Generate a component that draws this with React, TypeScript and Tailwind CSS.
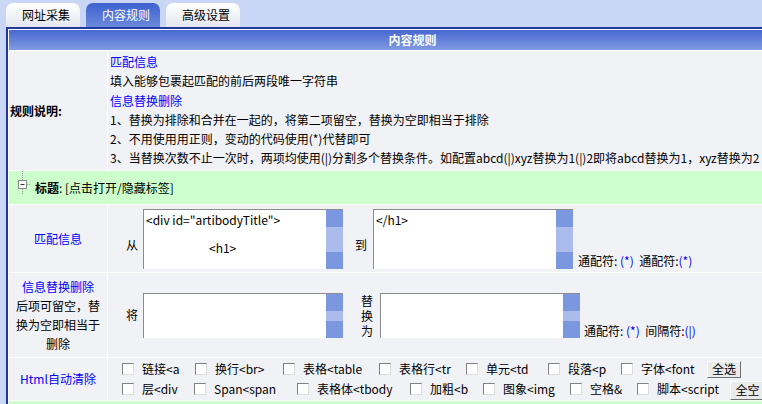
import React from "react";

const tabs = [
  { name: "网址采集", active: false },
  { name: "内容规则", active: true },
  { name: "高级设置", active: false },
];

const tagsTop = [
  { label: "链接<a", w: "w-[73px]" },
  { label: "换行<br>", w: "w-[88px]" },
  { label: "表格<table", w: "w-[96px]" },
  { label: "表格行<tr", w: "w-[87px]" },
  { label: "单元<td", w: "w-[82px]" },
  { label: "段落<p", w: "w-[73px]" },
  { label: "字体<font", w: "w-[86px]" },
];

const tagsBottom = [
  { label: "层<div", w: "w-[72px]" },
  { label: "Span<span", w: "w-[103px]" },
  { label: "表格体<tbody", w: "w-[113px]" },
  { label: "加粗<b", w: "w-[73px]" },
  { label: "图象<img", w: "w-[87px]" },
  { label: "空格&", w: "w-[67px]" },
  { label: "脚本<script", w: "w-[93px]" },
];

const Scrollbar: React.FC = () => (
  <div className="flex w-[17px] shrink-0 flex-col">
    <div className="h-[17px] bg-[#7b97df]" />
    <div className="flex-1 bg-[#aabbec]" />
    <div className="h-[17px] bg-[#7b97df]" />
  </div>
);

const FakeArea: React.FC<{ className: string; children?: React.ReactNode }> = ({ className, children }) => (
  <div className={`flex shrink-0 border-t border-l border-[#8c8c8c] bg-white ${className}`}>
    <div className="flex-1 overflow-hidden whitespace-pre pl-[2px] pt-[3px] leading-[14px]">{children}</div>
    <Scrollbar />
  </div>
);

const CheckItem: React.FC<{ label: string; w: string }> = ({ label, w }) => (
  <div className={`flex shrink-0 items-center ${w}`}>
    <span className="h-[12px] w-[12px] shrink-0 border border-t-[#808080] border-l-[#808080] border-r-[#dcdcdc] border-b-[#dcdcdc] bg-white" />
    <span className="ml-[8px] whitespace-nowrap">{label}</span>
  </div>
);

const Wild: React.FC<{ children: React.ReactNode }> = ({ children }) => (
  <span className="text-[#0000ff]">{children}</span>
);

export default function App() {
  return (
    <div className="h-[404px] w-[762px] overflow-hidden bg-[#c9d6f5] font-['Noto_Sans_CJK_SC',sans-serif] text-[12px] text-black">
      {/* tab strip */}
      <div className="flex h-[27px] items-end gap-[6px] pl-[6px]">
        {tabs.map((tab) => (
          <div
            key={tab.name}
            className={
              tab.active
                ? "flex h-[24px] w-[74px] items-center rounded-t-[7px] bg-linear-to-b from-[#3f61cf] to-[#6a89dc] pl-[16px] text-white"
                : "flex h-[24px] w-[74px] items-center rounded-t-[7px] bg-linear-to-b from-white to-[#e3e7ef] pl-[16px]"
            }
          >
            {tab.name}
          </div>
        ))}
      </div>

      {/* panel */}
      <div className="ml-[6px] w-[810px] border-t-2 border-l-2 border-[#21399a] bg-white pt-px pl-px">
        <div className="grid grid-cols-[98px_1fr] gap-px bg-white">
          <div className="col-span-2 flex h-[20px] items-center justify-center bg-linear-to-b from-[#4767cf] to-[#819ae3] font-bold text-white">
            内容规则
          </div>

          {/* 规则说明 */}
          <div className="flex h-[119px] items-center bg-[#f1f2f6] pl-px font-bold">规则说明:</div>
          <div className="h-[119px] whitespace-nowrap bg-[#f1f2f6] pt-px pl-[2px] leading-[19.3px]">
            <div className="text-[#0000ff]">匹配信息</div>
            <div>填入能够包裹起匹配的前后两段唯一字符串</div>
            <div className="text-[#0000ff]">信息替换删除</div>
            <div>1、替换为排除和合并在一起的，将第二项留空，替换为空即相当于排除</div>
            <div>2、不用使用用正则，变动的代码使用(*)代替即可</div>
            <div>3、当替换次数不止一次时，两项均使用(|)分割多个替换条件。如配置abcd(|)xyz替换为1(|)2即将abcd替换为1，xyz替换为2</div>
          </div>

          {/* 标题 toggle */}
          <div className="col-span-2 flex h-[33px] items-center bg-[#ccffcc]">
            <svg className="ml-[8px] shrink-0" width="14" height="33" viewBox="0 0 14 33">
              <line x1="5.5" y1="0" x2="5.5" y2="9" stroke="#9a9a9a" strokeDasharray="1 1" />
              <line x1="5.5" y1="18" x2="5.5" y2="24" stroke="#9a9a9a" strokeDasharray="1 1" />
              <line x1="10" y1="13.5" x2="14" y2="13.5" stroke="#9a9a9a" strokeDasharray="1 1" />
              <rect x="1.5" y="9.5" width="8" height="8" fill="#fff" stroke="#8a8a8a" />
              <line x1="3.5" y1="13.5" x2="7.5" y2="13.5" stroke="#333" />
            </svg>
            <span className="ml-[4px] font-bold">标题</span>
            <span>: [点击打开/隐藏标签]</span>
          </div>

          {/* 匹配信息 */}
          <div className="flex h-[67px] items-center justify-center bg-[#f1f2f6] text-[#0000ff]">匹配信息</div>
          <div className="flex h-[67px] items-center bg-[#f1f2f6] pl-[18px]">
            <span className="mt-[12px] mr-[5px]">从</span>
            <FakeArea className="h-[60px] w-[200px]">
              {'<div id="artibodyTitle">'}
              {"\n\n"}
              <span className="pl-[63px]">{"<h1>"}</span>
            </FakeArea>
            <span className="mt-[12px] ml-[12px] mr-[6px]">到</span>
            <div className="flex items-end">
              <FakeArea className="h-[60px] w-[200px]">{"</h1>"}</FakeArea>
              <span className="ml-[5px] mb-px whitespace-pre leading-[14px]">
                通配符: <Wild>(*)</Wild>  通配符:<Wild>(*)</Wild>
              </span>
            </div>
          </div>

          {/* 信息替换删除 */}
          <div className="flex h-[84px] flex-col items-center justify-center bg-[#f1f2f6] leading-[19px]">
            <span className="text-[#0000ff]">信息替换删除</span>
            <span>后项可留空，替</span>
            <span>换为空即相当于</span>
            <span>删除</span>
          </div>
          <div className="flex h-[84px] items-center bg-[#f1f2f6] pl-[18px]">
            <span className="mr-[5px]">将</span>
            <FakeArea className="h-[45px] w-[200px]" />
            <span className="ml-[18px] mr-[7px] w-[12px] whitespace-normal break-all leading-[15px]">替换为</span>
            <div className="flex items-end">
              <FakeArea className="h-[45px] w-[200px]" />
              <span className="ml-[4px] whitespace-pre leading-[14px]">
                通配符: <Wild>(*)</Wild>  间隔符:<Wild>(|)</Wild>
              </span>
            </div>
          </div>

          {/* Html自动清除 */}
          <div className="flex h-[42px] items-center justify-center bg-[#f1f2f6] text-[#0000ff]">Html自动清除</div>
          <div className="flex h-[42px] flex-col justify-center bg-[#f1f2f6] pl-[14px]">
            <div className="flex h-[20px] items-center">
              {tagsTop.map((t) => (
                <CheckItem key={t.label} label={t.label} w={t.w} />
              ))}
              <button className="h-[17px] w-[34px] border border-t-white border-l-white border-r-[#6f6f6f] border-b-[#6f6f6f] bg-[#ebebeb] text-[12px] leading-[14px]">
                全选
              </button>
            </div>
            <div className="flex h-[20px] items-center">
              {tagsBottom.map((t) => (
                <CheckItem key={t.label} label={t.label} w={t.w} />
              ))}
              <button className="mt-[2px] h-[19px] w-[35px] border border-t-white border-l-white border-r-[#6f6f6f] border-b-[#6f6f6f] bg-[#ebebeb] text-[12px] leading-[16px]">
                全空
              </button>
            </div>
          </div>

          <div className="col-span-2 h-[30px] bg-[#ccffcc]" />
        </div>
      </div>
    </div>
  );
}
